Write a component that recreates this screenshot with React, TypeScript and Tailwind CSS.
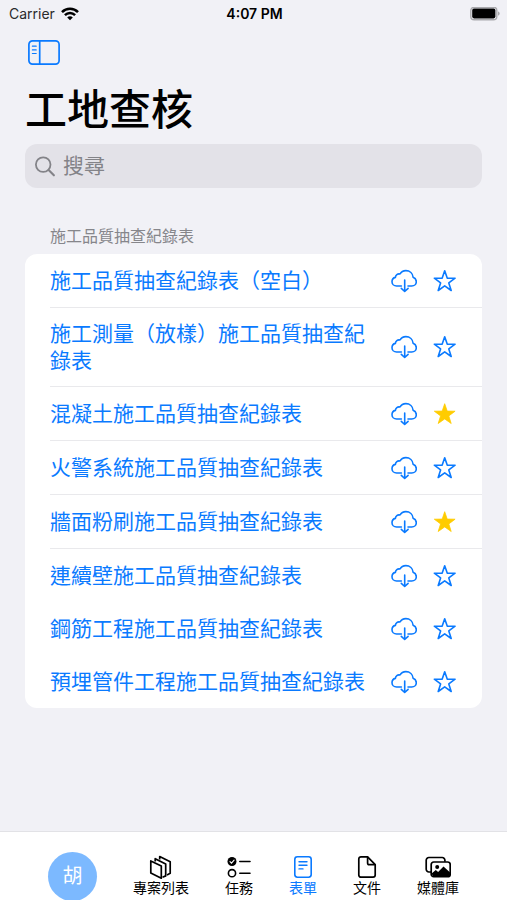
import { useState } from "react";

type Form = { name: string; starred: boolean; divider: boolean };

const initialForms: Form[] = [
  { name: "施工品質抽查紀錄表（空白）", starred: false, divider: true },
  { name: "施工測量（放樣）施工品質抽查紀錄表", starred: false, divider: true },
  { name: "混凝土施工品質抽查紀錄表", starred: true, divider: true },
  { name: "火警系統施工品質抽查紀錄表", starred: false, divider: true },
  { name: "牆面粉刷施工品質抽查紀錄表", starred: true, divider: true },
  { name: "連續壁施工品質抽查紀錄表", starred: false, divider: false },
  { name: "鋼筋工程施工品質抽查紀錄表", starred: false, divider: false },
  { name: "預埋管件工程施工品質抽查紀錄表", starred: false, divider: false },
];

function WifiIcon() {
  return (
    <svg className="h-[14px] w-[18px]" viewBox="0 0 18 14" fill="none" stroke="#000" strokeWidth="2.5" aria-hidden="true">
      <path d="M1 5.1C5.4.6 12.6.6 17 5.1" />
      <path d="M3.9 8.1c2.9-2.9 7.3-2.9 10.2 0" />
      <path d="M9 13.2 6.2 10.4c1.6-1.4 4-1.4 5.6 0z" fill="#000" stroke="none" />
    </svg>
  );
}

function BatteryIcon() {
  return (
    <svg className="h-[14px] w-[30px]" viewBox="0 0 30 14" aria-hidden="true">
      <rect x="0.8" y="0.2" width="26" height="12.6" rx="3.4" fill="none" stroke="#a9a9ad" strokeWidth="1.4" />
      <rect x="2.2" y="1.6" width="23.2" height="9.8" rx="1.8" fill="#000" />
      <path d="M28 4.4v4.4c1-.4 1.7-1.2 1.7-2.2S29 4.800 28 4.400z" fill="#a9a9ad" />
    </svg>
  );
}

function SidebarIcon() {
  return (
    <svg className="h-[25px] w-8" viewBox="0 0 32 25" fill="none" stroke="#0a7aff" strokeWidth="1.7" aria-hidden="true">
      <rect x="0.9" y="0.9" width="30.2" height="23.2" rx="3.6" />
      <path d="M11.7 1v23" />
      <path d="M4.4 6.2h3.800M4.400 9.900h3.800M4.400 13.500h3.800" strokeWidth="1.2" strokeLinecap="round" />
    </svg>
  );
}

function SearchIcon() {
  return (
    <svg className="h-[21px] w-[21px]" viewBox="0 0 21 21" fill="none" stroke="#838388" strokeWidth="1.8" strokeLinecap="round" aria-hidden="true">
      <circle cx="8.2" cy="8.600" r="7.300" />
      <path d="m13.600 14 5.300 5.300" strokeWidth="2.1" />
    </svg>
  );
}

function CloudIcon() {
  return (
    <svg className="h-6 w-[26px]" viewBox="0 0 26 24" fill="none" stroke="#0a7aff" strokeWidth="1.6" strokeLinecap="round" strokeLinejoin="round" aria-hidden="true">
      <path d="M10.4 17H5.600C2.900 17 1 15.100 1 12.700c0-2.200 1.400-3.900 3.400-4.300.1-2.500 2.200-4 4.600-3.400C10.100 2.900 12.300 1.600 14.900 1.600c3.900 0 6.900 2.800 7.200 6.700 2 .7 3.200 2.400 3.200 4.400 0 2.500-1.900 4.300-4.500 4.300h-3.800" />
      <path d="M13.700 11v11.300M10.300 19.300l3.400 3.200 3.400-3.200" />
    </svg>
  );
}

function StarIcon({ filled }: { filled: boolean }) {
  return (
    <svg className="h-6 w-6" viewBox="0 0 24 24" fill={filled ? "#ffcc00" : "none"} stroke={filled ? "#ffcc00" : "#0a7aff"} strokeWidth={filled ? "0.8" : "1.6"} strokeLinejoin="round" aria-hidden="true">
      <path d="M11.700 1.700 14.200 9.100 22.100 9.200 15.800 13.900 18.200 21.500 11.700 16.900 5.200 21.500 7.600 13.900 1.300 9.200 9.200 9.100z" />
    </svg>
  );
}

function ProjectsIcon() {
  return (
    <svg className="h-6 w-6" viewBox="0 0 24 24" fill="#fff" stroke="#000" strokeWidth="1.7" strokeLinejoin="round" aria-hidden="true">
      <path d="M10.700 4.500V1.600l10.500 5.200v11.500l-3.200 1.600" />
      <path d="M6.200 6.500V3.700l10.500 5.200v12l-3.200 1.300" />
      <path d="M1.800 5.900 12.300 11v12.200L1.800 18z" />
    </svg>
  );
}

function TasksIcon() {
  return (
    <svg className="h-6 w-6" viewBox="0 0 24 24" fill="none" stroke="#000" strokeWidth="1.6" strokeLinecap="round" aria-hidden="true">
      <circle cx="5" cy="6.500" r="4.500" fill="#000" stroke="none" />
      <path d="m3 6.600 1.500 1.500 2.600-3" stroke="#fff" strokeWidth="1.100" />
      <path d="M12.800 6.500h10.200M12.800 18.200h10.200" />
      <circle cx="5" cy="18.200" r="3.600" />
    </svg>
  );
}

function FormsIcon() {
  return (
    <svg className="h-6 w-6" viewBox="0 0 24 24" fill="none" stroke="#0a7aff" strokeWidth="1.600" strokeLinecap="round" aria-hidden="true">
      <rect x="3.800" y="1.800" width="16.400" height="20.400" rx="2.600" />
      <path d="M8 6.700h8M8 10.300h8M8 13.900h4" strokeWidth="1.400" />
    </svg>
  );
}

function FilesIcon() {
  return (
    <svg className="h-6 w-6" viewBox="0 0 24 24" fill="none" stroke="#000" strokeWidth="1.700" strokeLinejoin="round" aria-hidden="true">
      <path d="M12.600 1.800H6a2.200 2.200 0 0 0-2.200 2.200v16A2.200 2.200 0 0 0 6 22.200h12a2.200 2.200 0 0 0 2.200-2.200V9.700z" />
      <path d="M12.600 1.800v6.200c0 1.100.6 1.700 1.700 1.700h5.900" />
    </svg>
  );
}

function MediaIcon() {
  return (
    <svg className="h-6 w-[26px]" viewBox="0 0 26 24" fill="none" stroke="#000" strokeWidth="1.700" aria-hidden="true">
      <path d="M6 17H3.900A2.700 2.700 0 0 1 1.200 14.300V5.200a2.700 2.700 0 0 1 2.700-2.700h13.300a2.700 2.700 0 0 1 2.700 2.700v1.600" />
      <rect x="6.200" y="7" width="19" height="14.700" rx="2.500" />
      <path d="m6.600 18.500 4.200-3.500 2.300 1.900 5.400-5.400 6.600 6v2.500a1.500 1.500 0 0 1-1.500 1.500H8.100z" fill="#000" stroke="none" />
      <circle cx="12.200" cy="11.900" r="2" fill="#000" stroke="none" />
    </svg>
  );
}

const tabs = [
  { label: "專案列表", Icon: ProjectsIcon, active: false },
  { label: "任務", Icon: TasksIcon, active: false },
  { label: "表單", Icon: FormsIcon, active: true },
  { label: "文件", Icon: FilesIcon, active: false },
  { label: "媒體庫", Icon: MediaIcon, active: false },
];

export default function App() {
  const [forms, setForms] = useState(initialForms);

  const toggleStar = (name: string) =>
    setForms((all) => all.map((f) => (f.name === name ? { ...f, starred: !f.starred } : f)));

  return (
    <div className="flex min-h-screen flex-col bg-[#f1f1f6] font-['Inter','Noto_Sans_CJK_TC',sans-serif] text-black">
      <header className="grid h-7 grid-cols-3 items-center pl-[9px] pr-[7px] text-sm">
        <div className="flex items-center gap-[6px] text-[#2a2a2c]">
          <span>Carrier</span>
          <WifiIcon />
        </div>
        <time className="text-center font-semibold">4:07 PM</time>
        <div className="flex justify-end">
          <BatteryIcon />
        </div>
      </header>

      <main className="flex flex-col px-[25px] pb-8 pt-3">
        <button type="button" aria-label="側邊欄" className="ml-[3px] self-start">
          <SidebarIcon />
        </button>
        <h1 className="mt-5 text-[42px] font-medium leading-[50px]">工地查核</h1>

        <label className="mt-[9px] flex h-11 items-center gap-[7px] rounded-xl bg-[#e3e2e8] px-[10px]">
          <SearchIcon />
          <input
            type="search"
            aria-label="搜尋"
            placeholder="搜尋"
            className="min-w-0 flex-1 bg-transparent text-[21px] leading-7 outline-none placeholder:text-[#838388]"
          />
        </label>

        <section className="mt-9">
          <h2 className="pl-[25px] text-base leading-6 text-[#86868b]">施工品質抽查紀錄表</h2>
          <ul className="mt-[6px] rounded-xl bg-white pl-[25px]">
            {forms.map((form) => (
              <li
                key={form.name}
                className={
                  form.divider
                    ? "flex min-h-[54px] items-center gap-4 border-b border-[#e9e9ec] py-3 pr-[25px]"
                    : "flex min-h-[53px] items-center gap-4 py-3 pr-[25px]"
                }
              >
                <a href="#form" className="min-w-0 flex-1 text-[21px] leading-[27px] text-[#0a7aff]">
                  {form.name}
                </a>
                <button type="button" aria-label={`下載 ${form.name}`} className="shrink-0">
                  <CloudIcon />
                </button>
                <button
                  type="button"
                  aria-label={`收藏 ${form.name}`}
                  aria-pressed={form.starred}
                  onClick={() => toggleStar(form.name)}
                  className="shrink-0"
                >
                  <StarIcon filled={form.starred} />
                </button>
              </li>
            ))}
          </ul>
        </section>
      </main>

      <nav className="mt-auto flex h-[69px] items-center justify-between border-t border-[#e2e2e6] bg-white px-12 pt-5">
        <button
          type="button"
          className="flex h-[49px] w-[49px] items-center justify-center rounded-full bg-[#7cb9ff] text-xl text-white"
        >
          胡
        </button>
        {tabs.map(({ label, Icon, active }) => (
          <a
            key={label}
            href="#tab"
            aria-current={active ? "page" : undefined}
            className={
              active
                ? "flex flex-col items-center text-sm leading-[18px] text-[#0a7aff]"
                : "flex flex-col items-center text-sm leading-[18px]"
            }
          >
            <Icon />
            {label}
          </a>
        ))}
      </nav>
    </div>
  );
}
